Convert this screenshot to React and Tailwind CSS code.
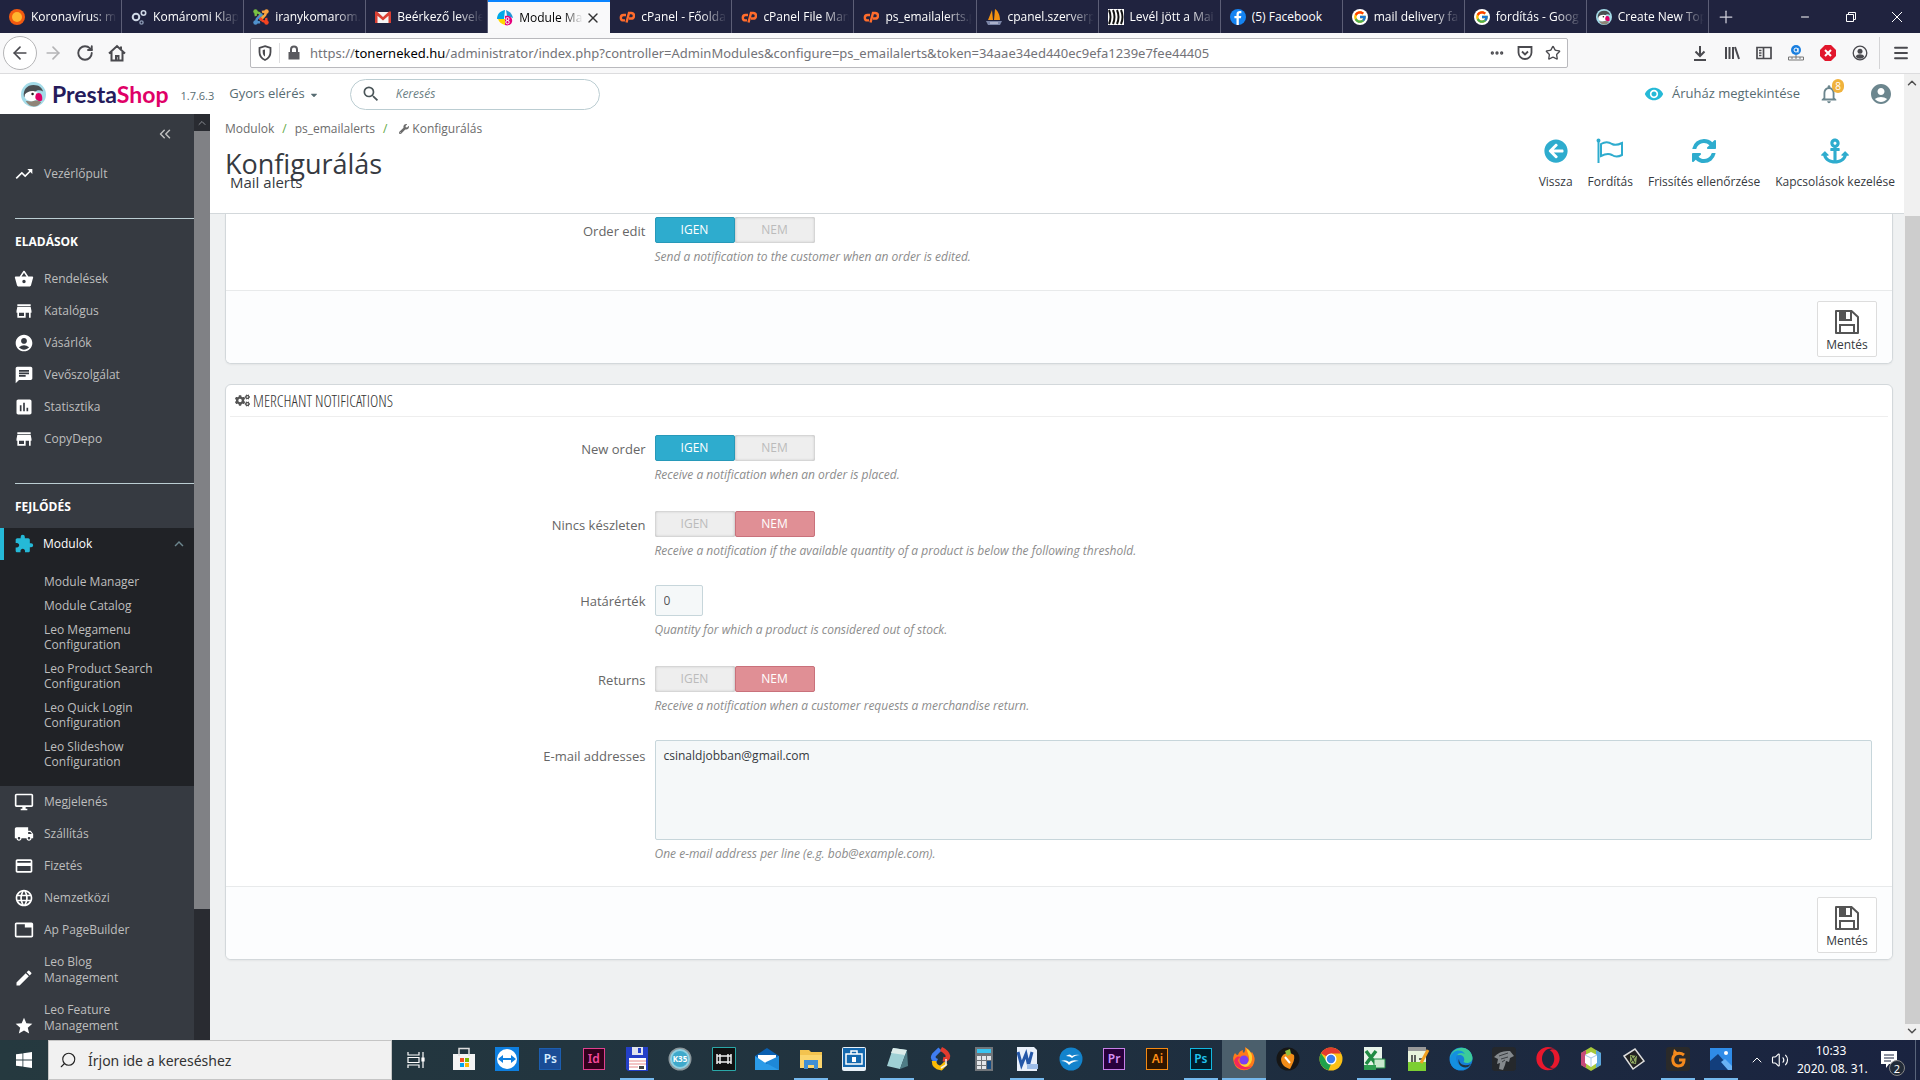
import { useState } from 'react';
import {
  MdTrendingUp, MdShoppingBasket, MdStore, MdAccountCircle, MdChat, MdAssessment,
  MdExtension, MdOutlineDesktopWindows, MdLocalShipping, MdPayment, MdLanguage, MdTab,
  MdEdit, MdStar, MdKeyboardArrowUp, MdRemoveRedEye, MdNotificationsNone, MdSearch,
} from 'react-icons/md';
import { FaArrowCircleLeft, FaAnchor, FaWrench, FaCogs, FaCaretDown, FaOpera } from 'react-icons/fa';
import { FcGoogle } from 'react-icons/fc';
import {
  ArrowLeft, ArrowRight, RotateCw, X, Plus, Minus, Menu, Star, ChevronUp,
  ChevronDown, ChevronsLeft, Volume2, Search, Ellipsis,
} from 'lucide-react';

/* ---------- logos ---------- */

const PuffinLogo = ({ className }) => (
  <svg viewBox="0 0 26 26" className={className} aria-hidden="true">
    <circle cx="13" cy="13" r="13" fill="#a4dbe8" />
    <path d="M3 15C2 8 6 3 13 3c6 0 9 3 10 7-3-2-6-2-8 0-3 4-7 6-12 5Z" fill="#4a4f52" />
    <path d="M4 13c3-4 9-5 13-2 2 4 0 8-5 9-5 0-9-2-8-7Z" fill="#fff" />
    <circle cx="12" cy="12.500" r="1.300" fill="#222" />
    <path d="M16 12c4-2 7 1 6 7-2 1-3 2-5 0-2-1-3-3-1-7Z" fill="#df0067" />
    <path d="M5 20c2-1 4 1 7 0s6-1 9 1c-4 6-12 6-16-1Z" fill="#8f8578" />
  </svg>
);

const OrangeDot = () => (
  <svg viewBox="0 0 16 16" className="size-4">
    <circle cx="8" cy="8" r="8" fill="#f25a10" />
    <circle cx="8" cy="8" r="5" fill="#ffb52e" />
  </svg>
);

const GearsIcon = () => (
  <svg viewBox="0 0 16 16" className="size-4" fill="none" stroke="#cfd8e6">
    <circle cx="5" cy="8" r="3.3" strokeWidth="2" />
    <circle cx="12.5" cy="4" r="2.2" strokeWidth="1.6" />
    <circle cx="10.5" cy="13.5" r="1.6" strokeWidth="1.4" stroke="#8d9bb5" />
  </svg>
);

const JoomlaIcon = () => (
  <svg viewBox="0 0 16 16" className="size-4" fill="none" strokeWidth="2.500">
    <path d="M3 7q-1-3 1-3.500t4 2.500l3 3" stroke="#7ac143" />
    <path d="M9 3q3-1 3.500 1T10 8l-3 3" stroke="#f9a541" />
    <path d="M13 9q1 3-1 3.500T8 10L5 7" stroke="#f44321" />
    <path d="M7 13q-3 1-3.500-1T6 8l3-3" stroke="#5091cd" />
    <g stroke="none">
      <circle cx="2.500" cy="2.500" r="2.200" fill="#7ac143" />
      <circle cx="13.500" cy="2.500" r="2.200" fill="#f9a541" />
      <circle cx="13.500" cy="13.500" r="2.200" fill="#f44321" />
      <circle cx="2.500" cy="13.500" r="2.200" fill="#5091cd" />
    </g>
  </svg>
);

const GmailIcon = () => (
  <svg viewBox="0 0 16 16" className="size-4">
    <path d="M1 3h14v11H1z" fill="#f4f4f4" />
    <path d="M0 2.500h2L8 8l6-5.500h2V14h-2.500V6.800L8 11.500 2.500 6.800V14H0z" fill="#d93f33" />
  </svg>
);

const TonerIcon = () => (
  <svg viewBox="0 0 16 16" className="size-4">
    <path d="M8 0C3 1 0 4 0 9h7z" fill="#00a8e8" />
    <path d="M9 0c4 2 6 4 7 8l-6-2z" fill="#2196d8" />
    <path d="M1 9h7v6C4 14 2 12 1 9Z" fill="#ffd800" />
    <path d="M8 6c5-1 8 2 7 6-1 3-4 4-7 3Z" fill="#e5007d" />
    <circle cx="10.500" cy="9" r="1.500" fill="none" stroke="#fff" />
    <circle cx="10.500" cy="12.200" r="1.700" fill="none" stroke="#fff" />
  </svg>
);

const CpanelIcon = () => (
  <svg viewBox="0 0 16 16" className="size-4" fill="none" stroke="#ff6c2c" strokeWidth="2.400">
    <path d="M7 6H4.500a2.700 2.700 0 0 0 0 5.400H6" />
    <path d="M7.500 13.500 10 4h2.200a2.500 2.500 0 0 1 0 5.500H10" />
  </svg>
);

const PmaIcon = () => (
  <svg viewBox="0 0 16 16" className="size-4">
    <path d="M6 1 2 11h5zM9 0l-1 11h6C14 6 12 2 9 0Z" fill="#f29111" />
    <path d="M0 12h16l-2 4H2z" fill="#7c86a8" />
    <path d="M4 14h8" stroke="#dde" />
  </svg>
);

const WaveIcon = () => (
  <svg viewBox="0 0 16 16" className="size-4">
    <path d="M0 0h16v16H0z" fill="#fff" />
    <path d="M1 1q3 7 0 14M5 1q3 7 0 14M9 1q3 7 0 14M13 1q3 7 0 14" stroke="#111" strokeWidth="2" fill="none" />
  </svg>
);

const FacebookIcon = () => (
  <svg viewBox="0 0 16 16" className="size-4">
    <circle cx="8" cy="8" r="8" fill="#1583f2" />
    <path d="M8.800 16V9.300h2.100l.4-2.400H8.800V5.600c0-.8.4-1.300 1.400-1.300h1.200V2.200C8.400 1.700 6.500 2.700 6.500 5.200v1.700H4.400v2.400h2.100V16z" fill="#fff" />
  </svg>
);

const GoogleTabIcon = () => (
  <span className="flex size-4 items-center justify-center rounded-full bg-white">
    <FcGoogle className="size-3.5" />
  </span>
);

/* ---------- browser chrome ---------- */

const tabs = [
  { title: 'Koronavírus: m', icon: <OrangeDot /> },
  { title: 'Komáromi Klap', icon: <GearsIcon /> },
  { title: 'iranykomarom.', icon: <JoomlaIcon /> },
  { title: 'Beérkező levele', icon: <GmailIcon /> },
  { title: 'Module Ma', icon: <TonerIcon />, active: true },
  { title: 'cPanel - Főolda', icon: <CpanelIcon /> },
  { title: 'cPanel File Man', icon: <CpanelIcon /> },
  { title: 'ps_emailalerts.p', icon: <CpanelIcon /> },
  { title: 'cpanel.szerverp', icon: <PmaIcon /> },
  { title: 'Levél jött a Mai', icon: <WaveIcon /> },
  { title: '(5) Facebook', icon: <FacebookIcon />, short: true },
  { title: 'mail delivery fai', icon: <GoogleTabIcon /> },
  { title: 'fordítás - Goog', icon: <GoogleTabIcon /> },
  { title: 'Create New Top', icon: <PuffinLogo className="size-4" /> },
];

const Tab = ({ tab }) => (
  <div
    className={
      tab.active
        ? 'flex h-full min-w-0 flex-1 items-center border-t-2 border-[#0a84ff] bg-[#f9f9fa] pr-[5px] pl-[9px] text-black'
        : 'flex h-full min-w-0 flex-1 items-center border-r border-[#5c5e76] pr-1 pl-[9px] text-white'
    }
  >
    <span className="shrink-0">{tab.icon}</span>
    <span
      className={
        tab.short
          ? 'ml-1.5 min-w-0 flex-1 overflow-hidden whitespace-nowrap'
          : 'ml-1.5 min-w-0 flex-1 overflow-hidden whitespace-nowrap [mask-image:linear-gradient(to_right,black_70%,transparent)]'
      }
    >
      {tab.title}
    </span>
    {tab.active && (
      <button type="button" aria-label="Close tab" className="mr-1 ml-0.5 shrink-0">
        <X className="size-4 text-[#333]" />
      </button>
    )}
  </div>
);

const TabBar = () => (
  <div className="flex h-[33px] shrink-0 items-center bg-[#20233f] text-[12px]">
    <div className="flex h-full w-[89%] shrink-0">
      {tabs.map((tab) => <Tab key={tab.title} tab={tab} />)}
    </div>
    <button type="button" aria-label="New tab" className="ml-[7px] text-[#d0d1dc]">
      <Plus className="size-5" strokeWidth={1.5} />
    </button>
    <div className="ml-auto flex text-white">
      <button type="button" aria-label="Minimize" className="flex w-[46px] items-center justify-center">
        <Minus className="size-3" strokeWidth={2} />
      </button>
      <button type="button" aria-label="Restore" className="flex w-[46px] items-center justify-center">
        <svg viewBox="0 0 10 10" className="size-[10px]" fill="none" stroke="currentColor">
          <path d="M.5 2.500h7v7h-7zM2.500 2.500v-2h7v7h-2" />
        </svg>
      </button>
      <button type="button" aria-label="Close" className="flex w-[46px] items-center justify-center">
        <svg viewBox="0 0 10 10" className="size-[10px]" stroke="currentColor"><path d="m0 0 10 10M10 0 0 10" /></svg>
      </button>
    </div>
  </div>
);

const AddressBar = () => (
  <div className="flex h-[41px] shrink-0 items-center border-b border-[#dcdcde] bg-[#f8f8f9] text-[#4a4a4f]">
    <button type="button" aria-label="Back" className="ml-[3px] flex size-[34px] items-center justify-center rounded-full border border-[#b5b5b7] bg-white">
      <ArrowLeft className="size-5" />
    </button>
    <button type="button" aria-label="Forward" className="ml-1.5 text-[#b4b4b6]"><ArrowRight className="size-5" /></button>
    <button type="button" aria-label="Reload" className="ml-[13px]"><RotateCw className="size-[18px]" strokeWidth={2.500} /></button>
    <button type="button" aria-label="Home" className="ml-3.5">
      <svg viewBox="0 0 18 18" className="size-[18px]" fill="none" stroke="currentColor" strokeWidth="2">
        <path d="M1 9.500 9 2l8 7.500M3.500 8v8.500h11V8M13 5V2.500M8 16v-4h2.500v4" />
      </svg>
    </button>
    <div className="ml-[124px] flex h-[30px] flex-1 items-center rounded-xs border border-[#b9b9bd] bg-white">
      <svg viewBox="0 0 16 16" className="ml-1.5 size-4" fill="none" stroke="currentColor" strokeWidth="1.800">
        <path d="M8 1.200 13.500 3v4c0 4-2 6.500-5.500 8-3.500-1.500-5.500-4-5.500-8V3z" />
        <path d="M8 4.500v7c-1.500-1-2.300-2.500-2.300-4.500V5z" fill="currentColor" stroke="none" />
      </svg>
      <span className="mx-1.5 h-5 w-px bg-[#dedee0]" />
      <svg viewBox="0 0 16 16" className="size-4" fill="#5a5a5f">
        <path d="M2.500 7h11v7.500h-11z" />
        <path d="M5 7V4.500a3 3 0 0 1 6 0V7" fill="none" stroke="#5a5a5f" strokeWidth="2" />
      </svg>
      <p className="ml-2 min-w-0 flex-1 overflow-hidden pt-px font-['Noto_Sans',sans-serif] text-[13px] whitespace-nowrap text-[#737378]">
        https://<span className="text-black">tonerneked.hu</span>/administrator/index.php?controller=AdminModules&amp;configure=ps_emailalerts&amp;token=34aae34ed440ec9efa1239e7fee44405
      </p>
      <div className="mr-1.5 flex items-center gap-3">
        <button type="button" aria-label="Page actions"><Ellipsis className="size-4" strokeWidth={3} /></button>
        <button type="button" aria-label="Save to Pocket">
          <svg viewBox="0 0 16 16" className="size-4" fill="none" stroke="currentColor" strokeWidth="1.800">
            <path d="M1.500 2h13v5.500a6.500 6.500 0 0 1-13 0z" /><path d="m5 6.500 3 3 3-3" />
          </svg>
        </button>
        <button type="button" aria-label="Bookmark"><Star className="size-4" /></button>
      </div>
    </div>
    <div className="mr-[11px] ml-[124px] flex items-center gap-4">
      <svg viewBox="0 0 16 16" className="size-4" fill="none" stroke="currentColor" strokeWidth="2"><path d="M8 1v9.500M3.500 6.500 8 11l4.500-4.500M2 15h12" /></svg>
      <svg viewBox="0 0 16 16" className="size-4" fill="none" stroke="currentColor" strokeWidth="2"><path d="M2 2v12M5.500 2v12M9 2v12M11 2l4 12" /></svg>
      <svg viewBox="0 0 16 16" className="size-4" fill="none" stroke="currentColor" strokeWidth="1.700"><path d="M1 2.500h14v11H1zM7.500 2.500v11M3 5.500h2.500M3 8h2.500M3 10.500h2.500" /></svg>
      <svg viewBox="0 0 16 16" className="size-4"><circle cx="8" cy="5" r="5" fill="#1a7fe0" /><circle cx="8" cy="5" r="2" fill="none" stroke="#fff" /><path d="M10 3v4.500" stroke="#fff" /><path d="M.5 15v-3h15v3zM4 12v2M8 10v4M12 12v2" fill="none" stroke="#777" /></svg>
      <svg viewBox="0 0 16 16" className="size-4"><path d="M5 0h6l5 5v6l-5 5H5l-5-5V5z" fill="#e2172c" /><path d="m5 5 6 6M11 5l-6 6" stroke="#fff" strokeWidth="2" /></svg>
      <svg viewBox="0 0 16 16" className="size-4" fill="currentColor"><circle cx="8" cy="8" r="6.800" fill="none" stroke="currentColor" strokeWidth="1.300" /><circle cx="8" cy="6.300" r="2.500" /><path d="M3.800 11.500c1-3 7.400-3 8.400 0-2 3-6.400 3-8.400 0Z" /></svg>
    </div>
    <div className="flex h-8 items-center border-l border-[#d4d4d6] pr-2.5 pl-3">
      <button type="button" aria-label="Menu"><Menu className="size-[18px]" strokeWidth={2.500} /></button>
    </div>
  </div>
);

/* ---------- back office ---------- */

const AdminHeader = () => (
  <header className="flex h-10 shrink-0 items-center bg-white pr-[11px] pl-[21px] text-[#576c72]">
    <a href="#" className="flex items-center">
      <PuffinLogo className="size-[25px]" />
      <span className="ml-1.5 font-['Lato',sans-serif] text-[23px] leading-6 font-bold text-[#251b5b]">
        Presta<span className="text-[#df0067]">Shop</span>
      </span>
    </a>
    <span className="mt-1 ml-3 text-[11px] leading-4">1.7.6.3</span>
    <button type="button" className="ml-[15px] flex items-center gap-1 text-[13px]">
      Gyors elérés <FaCaretDown className="mt-0.5 size-2.5" />
    </button>
    <div className="ml-[31px] flex h-[31px] w-[250px] items-center rounded-full border border-[#bbcdd2] bg-white px-2.5">
      <MdSearch className="size-5 shrink-0 text-[#4a5558]" />
      <input
        type="text"
        aria-label="Keresés"
        placeholder="Keresés"
        className="ml-[15px] w-full min-w-0 text-[12px] italic outline-none placeholder:text-[#6c7f85]"
      />
    </div>
    <a href="#" className="ml-auto flex items-center gap-2 text-[13px]">
      <MdRemoveRedEye className="size-5 text-[#25b9d7]" /> Áruház megtekintése
    </a>
    <button type="button" aria-label="Értesítések" className="relative ml-[18px]">
      <MdNotificationsNone className="size-[22px] text-[#6c868e]" />
      <span className="absolute -top-1 -right-1 flex h-3.5 w-3 items-center justify-center rounded-full bg-[#f0b23c] text-[10px] leading-3 text-white">8</span>
    </button>
    <button type="button" aria-label="Profil" className="ml-[29px]">
      <MdAccountCircle className="size-6 text-[#6c868e]" />
    </button>
  </header>
);

const sales = [
  { label: 'Rendelések', icon: MdShoppingBasket },
  { label: 'Katalógus', icon: MdStore },
  { label: 'Vásárlók', icon: MdAccountCircle },
  { label: 'Vevőszolgálat', icon: MdChat },
  { label: 'Statisztika', icon: MdAssessment },
  { label: 'CopyDepo', icon: MdStore },
];

const moduleLinks = [
  'Module Manager',
  'Module Catalog',
  'Leo Megamenu Configuration',
  'Leo Product Search Configuration',
  'Leo Quick Login Configuration',
  'Leo Slideshow Configuration',
];

const improve = [
  { label: 'Megjelenés', icon: MdOutlineDesktopWindows },
  { label: 'Szállítás', icon: MdLocalShipping },
  { label: 'Fizetés', icon: MdPayment },
  { label: 'Nemzetközi', icon: MdLanguage },
  { label: 'Ap PageBuilder', icon: MdTab },
  { label: 'Leo Blog Management', icon: MdEdit },
  { label: 'Leo Feature Management', icon: MdStar },
];

const MenuItem = ({ label, icon: Icon }) => (
  <li>
    <a href="#" className="flex items-end py-2 pr-12 pl-3.5 leading-4">
      <Icon className="-my-0.5 mr-2.5 size-5 shrink-0 text-white" />
      <span>{label}</span>
    </a>
  </li>
);

const Sidebar = () => (
  <aside className="flex w-[210px] shrink-0 overflow-hidden bg-[#363a41] text-[12px] text-[#bebebe]">
    <nav className="min-w-0 flex-1 overflow-hidden">
      <div className="flex h-10 items-center justify-end pr-5">
        <button type="button" aria-label="Collapse menu"><ChevronsLeft className="size-[18px]" /></button>
      </div>
      <ul className="mt-1"><MenuItem label="Vezérlőpult" icon={MdTrendingUp} /></ul>
      <h2 className="mt-7 ml-[15px] border-t border-[#bbcdd2] pt-[15px] leading-4 font-bold text-white">ELADÁSOK</h2>
      <ul className="mt-[13px]">
        {sales.map((item) => <MenuItem key={item.label} {...item} />)}
      </ul>
      <h2 className="mt-7 ml-[15px] border-t border-[#bbcdd2] pt-[15px] leading-4 font-bold text-white">FEJLŐDÉS</h2>
      <div className="mt-[13px] bg-[#202226] pb-[13px]">
        <a href="#" className="flex h-8 items-center border-l-4 border-[#25b9d7] pr-1.5 pl-2.5 text-white">
          <MdExtension className="mr-[9px] size-5 text-[#25b9d7]" /> Modulok
          <MdKeyboardArrowUp className="ml-auto size-[18px] text-[#6c868e]" />
        </a>
        <ul className="mt-[9px] pr-6 pl-11">
          {moduleLinks.map((label) => (
            <li key={label} className="pt-[5px] pb-1 leading-[15px]"><a href="#" className="block">{label}</a></li>
          ))}
        </ul>
      </div>
      <ul>
        {improve.map((item) => <MenuItem key={item.label} {...item} />)}
      </ul>
    </nav>
    <div className="flex w-4 shrink-0 flex-col bg-[#292b31]">
      <span className="flex h-[17px] items-center justify-center"><ChevronUp className="size-3 text-[#8a8d93]" /></span>
      <span className="h-[84%] bg-[#808185]" />
    </div>
  </aside>
);

const FlagIcon = () => (
  <svg viewBox="0 0 28 28" className="size-7" fill="none" stroke="currentColor" strokeWidth="2">
    <path d="M2.500 4v22" /><circle cx="2.500" cy="3.500" r="1" />
    <path d="M5 7c5-3 8-2 11 0 3 1.500 6 1 10-1v12c-4 2-7 2-10 0-3-1.500-6-1.500-11 1z" />
  </svg>
);

const RefreshIcon = () => (
  <svg viewBox="0 0 1536 1536" className="m-0.5 size-6" fill="currentColor">
    <path d="M1511 928q0 5-1 7-64 268-268 434.500t-478 166.500q-146 0-282.500-55t-243.500-157l-129 129q-19 19-45 19t-45-19-19-45v-448q0-26 19-45t45-19h448q26 0 45 19t19 45-19 45l-137 137q71 66 161 102t187 36q134 0 250-65t186-179q11-17 53-117 8-23 30-23h192q13 0 22.500 9.500t9.500 22.500zm25-800v448q0 26-19 45t-45 19h-448q-26 0-45-19t-19-45 19-45l138-138q-148-137-349-137-134 0-250 65t-186 179q-11 17-53 117-8 23-30 23h-199q-13 0-22.500-9.500t-9.500-22.500v-7q65-268 270-434.500t480-166.500q146 0 284 55.500t245 156.500l130-129q19-19 45-19t45 19 19 45z" />
  </svg>
);

const actions = [
  { label: 'Vissza', icon: <FaArrowCircleLeft className="m-0.5 size-6" /> },
  { label: 'Fordítás', icon: <FlagIcon /> },
  { label: 'Frissítés ellenőrzése', icon: <RefreshIcon /> },
  { label: 'Kapcsolások kezelése', icon: <FaAnchor className="size-7" /> },
];

const PageHead = () => (
  <div className="flex h-[100px] shrink-0 justify-between border-b border-[#d3d8db] bg-white pr-[9px] pl-[15px]">
    <div>
      <nav className="mt-[5px] flex items-center text-[12px] leading-5 text-[#6c6c6c]">
        <a href="#">Modulok</a>
        <span className="px-2 text-[#5fa843]">/</span>
        <a href="#">ps_emailalerts</a>
        <span className="px-2 text-[#5fa843]">/</span>
        <FaWrench className="mr-[3px] ml-1 size-2.5" /> Konfigurálás
      </nav>
      <h1 className="mt-[7px] text-[27px] leading-9 text-[#363a41]">Konfigurálás</h1>
      <h4 className="-mt-2.5 ml-[5px] text-[15px] leading-5 text-[#363a41]">Mail alerts</h4>
    </div>
    <div className="flex items-start gap-[15px] pt-[23px] text-[12px] leading-4 text-[#363a41]">
      {actions.map(({ label, icon }) => (
        <a key={label} href="#" className="flex flex-col items-center gap-[9px]">
          <span className="text-[#2eacce]">{icon}</span>
          {label}
        </a>
      ))}
    </div>
  </div>
);

const Row = ({ label, labelId, htmlFor, help, children }) => (
  <div className="flex">
    {htmlFor
      ? <label htmlFor={htmlFor} className="w-1/4 shrink-0 pr-[7px] text-right text-[13px] leading-8 text-[#666]">{label}</label>
      : <span id={labelId} className="w-1/4 shrink-0 pr-[7px] text-right text-[13px] leading-8 text-[#666]">{label}</span>}
    <div className="ml-0.5 min-w-0 flex-1">
      {children}
      <p className="mt-[5px] text-[12px] leading-[18px] text-[#8c8c8c] italic">{help}</p>
    </div>
  </div>
);

const SwitchRow = ({ name, label, help, initial }) => {
  const [on, setOn] = useState(initial);
  const off = 'flex h-full w-20 items-center justify-center rounded-xs text-[#bbb] shadow-[inset_0_0_3px_#aaa]';
  return (
    <Row label={label} labelId={`${name}-label`} help={help}>
      <div role="radiogroup" aria-labelledby={`${name}-label`} className="relative mt-[2px] flex h-[26px] w-40 rounded-xs bg-[#eee] text-[12px]">
        <input type="radio" id={`${name}-on`} name={name} checked={on} onChange={() => setOn(true)} className="sr-only" />
        <label
          htmlFor={`${name}-on`}
          className={on ? 'flex h-full w-20 items-center justify-center rounded-xs border border-[#2799b9] bg-[#2eacce] text-white' : off}
        >
          IGEN
        </label>
        <input type="radio" id={`${name}-off`} name={name} checked={!on} onChange={() => setOn(false)} className="sr-only" />
        <label
          htmlFor={`${name}-off`}
          className={on ? off : 'flex h-full w-20 items-center justify-center rounded-xs border border-[#c9717b] bg-[#e08f95] text-white'}
        >
          NEM
        </label>
      </div>
    </Row>
  );
};

const SaveFooter = () => (
  <div className="flex justify-end border-t border-[#e8eaeb] bg-[#fcfdfe] pt-2.5 pr-[15px] pb-1.5">
    <button type="submit" className="flex h-14 w-[60px] flex-col items-center rounded-xs border border-[#ddd] bg-white pt-2 text-[12px] leading-4 text-[#363a41]">
      <svg viewBox="0 0 24 24" className="mb-[3px] size-6" fill="none" stroke="#555" strokeWidth="2">
        <path d="M1 1h15.500L23 7v16H1z" strokeLinejoin="round" />
        <path d="M5 1h11v9H5z" /><path d="M5 1h5v9H5z" fill="#555" />
        <path d="M5 23v-8h14v8" />
      </svg>
      Mentés
    </button>
  </div>
);

const Content = () => (
  <main className="flex-1 overflow-hidden bg-[#eff1f2] pr-[11px] pl-[15px]">
    <form className="overflow-hidden rounded-b-md border-x border-b border-[#d3d8db] bg-white shadow-xs">
      <div className="px-5 pt-px pb-6">
        <SwitchRow name="order-edit" label="Order edit" help="Send a notification to the customer when an order is edited." initial />
      </div>
      <SaveFooter />
    </form>
    <form className="mt-5 overflow-hidden rounded-md border border-[#d3d8db] bg-white shadow-xs">
      <h3 className="mx-1 flex h-8 items-center border-b border-[#eee] pl-[5px] font-['Open_Sans_Condensed_Light','Open_Sans_Condensed','Open_Sans',sans-serif] text-[16px] font-light text-[#333]">
        <FaCogs className="mr-[3px] size-[15px] text-[#555]" /> MERCHANT NOTIFICATIONS
      </h3>
      <div className="flex flex-col gap-[25px] px-5 pt-4 pb-[23px]">
        <SwitchRow name="new-order" label="New order" help="Receive a notification when an order is placed." initial />
        <SwitchRow name="oos" label="Nincs készleten" help="Receive a notification if the available quantity of a product is below the following threshold." initial={false} />
        <Row label="Határérték" htmlFor="threshold" help="Quantity for which a product is considered out of stock.">
          <input
            id="threshold"
            type="text"
            defaultValue="0"
            className="block h-[31px] w-12 rounded-xs border border-[#c7d6db] bg-[#f5f8f9] px-2 text-[12px] text-[#555]"
          />
        </Row>
        <SwitchRow name="returns" label="Returns" help="Receive a notification when a customer requests a merchandise return." initial={false} />
        <Row label="E-mail addresses" htmlFor="emails" help="One e-mail address per line (e.g. bob@example.com).">
          <textarea
            id="emails"
            defaultValue="csinaldjobban@gmail.com"
            className="block h-[100px] w-full resize-none rounded-xs border border-[#c7d6db] bg-[#f5f8f9] px-2 py-1.5 text-[12px] leading-[18px] text-[#363a41]"
          />
        </Row>
      </div>
      <SaveFooter />
    </form>
  </main>
);

const PageScrollbar = () => (
  <div className="flex w-4 shrink-0 flex-col items-center bg-[#f0f0f0] py-0.5 text-[#505050]">
    <ChevronUp className="size-3.5" strokeWidth={2.500} />
    <span className="mt-auto h-[84%] w-[15px] bg-[#cdcdcd]" />
    <ChevronDown className="size-3.5" strokeWidth={2.500} />
  </div>
);

/* ---------- taskbar ---------- */

const Svg = ({ children }) => <svg viewBox="0 0 24 24" className="size-6">{children}</svg>;

const AdobeTile = ({ text, className }) => (
  <span className={`flex size-[22px] items-center justify-center border text-[12px] leading-3 font-semibold ${className}`}>{text}</span>
);

const apps = [
  { name: 'Store', icon: <Svg><path d="M1 7h22v16H1z" fill="#f4f4f4" /><path d="M7 9V1.500h10V9" fill="none" stroke="#ddd" strokeWidth="1.500" /><path d="M8 11h4v4H8z" fill="#f25022" /><path d="M13 11h4v4h-4z" fill="#7fba00" /><path d="M8 16h4v4H8z" fill="#00a4ef" /><path d="M13 16h4v4h-4z" fill="#ffb900" /></Svg> },
  { name: 'TeamViewer', icon: <Svg><path d="M0 0h24v24H0z" fill="#0e7fe0" /><circle cx="12" cy="12" r="10" fill="#fff" /><path d="m3 12 5-4v3h8V8l5 4-5 4v-3H8v3z" fill="#0e7fe0" /></Svg> },
  { name: 'Photoshop CS', icon: <AdobeTile text="Ps" className="border-[#1c5eb0] bg-[#1a4c96] text-[#d6ecff]" /> },
  { name: 'InDesign', icon: <AdobeTile text="Id" className="border-[#e0408f] bg-[#33001c] text-[#f5499c]" /> },
  { name: 'Total Commander', running: true, icon: <Svg><path d="M1 0h22v24H3l-2-2z" fill="#2440c8" /><path d="M7 0h11v8H7z" fill="#dfe3ee" /><path d="M13 1h3v5h-3z" fill="#2440c8" /><path d="M4 11h17v12H4z" fill="#fff" /><path d="M4 14h17M4 17h17M4 20h9" stroke="#e78a8a" /><path d="M14 19h5v3h-5z" fill="#444" /></Svg> },
  { name: 'KBS', icon: <Svg><circle cx="12" cy="12" r="11.500" fill="#8b979c" /><circle cx="12" cy="12" r="10" fill="#8fd0e2" /><circle cx="12" cy="12" r="8" fill="#3fa9cb" /><text x="12" y="15" fontSize="8" fontWeight="bold" textAnchor="middle" fill="#fff">K35</text></Svg> },
  { name: 'Video', icon: <Svg><path d="M.5.5h23v23H.5z" fill="#111" stroke="#2aa8a8" /><path d="M5 7v10M8 7v10M16 7v10M19 7v10M5 9h14M5 15h14" stroke="#eee" strokeWidth="1.500" /></Svg> },
  { name: 'Mail', icon: <Svg><path d="M0 9 12 1l12 8v14H0z" fill="#0a5fb0" /><path d="M3 8h18v8H3z" fill="#fff" /><path d="m0 9 12 8 12-8v14H0z" fill="#2b9be8" /><path d="M24 9v14L10 15.500z" fill="#1e88d8" /></Svg> },
  { name: 'File Explorer', running: true, icon: <Svg><path d="M1 3h9l2 2h11v16H1z" fill="#f3c34f" /><path d="M1 8h22v13H1z" fill="#fbd56d" /><path d="M5 13h14v9h-4v-4H9v4H5z" fill="#3f8fd4" /></Svg> },
  { name: 'Locker', icon: <Svg><rect width="24" height="24" rx="2" fill="#e8f1f8" /><path d="M1 1h22v19H1z" fill="#1468ae" /><path d="M4 7h16v10H4zM9 7V4h6v3" fill="none" stroke="#fff" strokeWidth="1.500" /><path d="M10 10h4v5h-4z" fill="#fff" /></Svg> },
  { name: 'Notepad', running: true, icon: <Svg><path d="m8 1 14 2-7 19L2 19z" fill="#9fd0d5" /><path d="m8 1 14 2-2 5L6 6z" fill="#dcebe9" /><path d="m22 3 1 16-8 3z" fill="#4f7d86" /></Svg> },
  { name: 'Editor', icon: <Svg><g fill="none" strokeWidth="4.500"><path d="M11 2 5 8q-2 3 1 5l2 1" stroke="#3f7df0" /><path d="M12 2q6 3 7 7 0 4-5 3" stroke="#e33b2e" /><path d="M5 14q0 6 7 7l5-5" stroke="#fbbc05" /></g><path d="M17 12v6l-5 3" fill="none" stroke="#f0f0f0" strokeWidth="1.500" /></Svg> },
  { name: 'Calculator', icon: <Svg><path d="M3 0h18v24H3z" fill="#70757a" /><path d="M5 2h14v4H5z" fill="#39c3ee" /><path d="M5 9h4v4H5zM10 9h4v4h-4zM15 9h4v4h-4zM5 14h4v4H5zM10 14h4v4h-4zM5 19h4v3H5zM10 19h4v3h-4z" fill="#e4e7ea" /><path d="M15 14h4v8h-4z" fill="#174c82" /></Svg> },
  { name: 'Word', running: true, icon: <Svg><path d="M2 0h17l3 3v21H2z" fill="#e9f0fa" /><path d="m3 5 3.500 13L11 7l2.500 11L17 5" fill="none" stroke="#2457a8" strokeWidth="3" /><path d="M12 17h11v5H12z" fill="#9dbde8" /></Svg> },
  { name: 'OpenOffice', icon: <Svg><circle cx="12" cy="12" r="11.500" fill="#1383cc" /><path d="M7 9q4-3 6 0 3-2 8-1-5 0-8 3-2-2-6-2ZM2 14q5-2 8 1 4-3 10-1-6 0-10 4-3-4-8-4Z" fill="#fff" /></Svg> },
  { name: 'Premiere', icon: <AdobeTile text="Pr" className="border-[#c77fe8] bg-[#28003c] text-[#d691f5]" /> },
  { name: 'Illustrator', icon: <AdobeTile text="Ai" className="border-[#f58a12] bg-[#2e1600] text-[#ff8f16]" /> },
  { name: 'Photoshop', running: true, icon: <AdobeTile text="Ps" className="border-[#12b8e0] bg-[#001d2b] text-[#20c4ef]" /> },
  { name: 'Firefox', running: true, focused: true, icon: <Svg><path d="M3 6q1 2 3 2 1-4 5-5-1 2 1 3 2-3 1-6 4 2 6 6l1-1q4 6 2 11a10.500 10.500 0 0 1-20 0Q0 10 3 6Z" fill="#ff7a1a" /><path d="M14 1q5 3 6 8 1 9-7 11-7 0-8-6 2 3 7 3 6-1 5-7-1-4-3-9Z" fill="#ffd02e" /><circle cx="12" cy="13" r="4.500" fill="#7b3ff2" /><path d="M2 14a10.500 10.500 0 0 0 18 5q-9 4-14-5 0-3 3-4-5-2-7 4Z" fill="#f5285a" /></Svg> },
  { name: 'FL Studio', icon: <Svg><circle cx="12" cy="12" r="11.500" fill="#161616" /><path d="M5 12c1-6 8-8 13-4 1 5-1 8-4 14-4-1-9-4-9-10Z" fill="#f28c18" /><path d="m9 4 5-2 1 5-4 2z" fill="#8fbf3c" /><path d="m9 10 5 6" stroke="#fff" strokeWidth="2" /></Svg> },
  { name: 'Chrome', icon: <Svg><circle cx="12" cy="12" r="11.500" fill="#fbc116" /><path d="M12 12 2 6.300A11.500 11.500 0 0 1 22 6.500H12z" fill="#e33b2e" /><path d="M2 6.300 8 15l4 2-2.500 6.200A11.500 11.500 0 0 1 2 6.300Z" fill="#1fa14b" /><circle cx="12" cy="12" r="5.500" fill="#fff" /><circle cx="12" cy="12" r="4.200" fill="#3b7ded" /></Svg> },
  { name: 'Excel', running: true, icon: <Svg><path d="M2 0h18v20H2z" fill="#e8f4ea" /><path d="m4 4 10 13M14 4 4 17" stroke="#1f8a43" strokeWidth="3.500" /><path d="M12 12h11v9H12z" fill="#c8e8cd" stroke="#1f8a43" /><path d="M2 18h12v5H2z" fill="#2f9e52" /></Svg> },
  { name: 'Notepad++', icon: <Svg><path d="M2 2h18v22H2z" fill="#e9f3dc" /><path d="M2 15h18v9H2z" fill="#7ccf32" /><path d="M2 0h18v4H2z" fill="#999" /><path d="M6 8v7M9 8v7M13 12h4" stroke="#333" strokeWidth="1.500" /><path d="m22 3-7 13" stroke="#f0a020" strokeWidth="3" /></Svg> },
  { name: 'Edge', icon: <Svg><circle cx="12" cy="12" r="11.500" fill="#1580d8" /><path d="M1 11C3-2 22-3 23.500 11c0 5-6 6-9 4 2-3 0-7-4-7-5 0-8 2-9.500 3Z" fill="#3ccb9a" /><path d="M1 11C3 3 12 1 16 7c-6-3-9 1-9 5 1 6 6 9 12 8C10 27 0 21 1 11Z" fill="#1490df" /><path d="M10 12c0 5 5 8 12 5l-3 3c-7 2-11-4-9-8Z" fill="#20323f" /></Svg> },
  { name: 'Wolf', icon: <Svg><rect width="24" height="24" rx="3" fill="#25282c" /><path d="M2 10q6-7 16-6l4 5-4 2-1 4-3-1-1 4-2 5-4-1 1-6-3 1 1-5z" fill="#84898d" /><path d="m7 9 9-3M9 12l7-2M10 15l3-2" stroke="#3a3e42" /></Svg> },
  { name: 'Opera', icon: <FaOpera className="size-6 text-[#e8182d]" /> },
  { name: 'Cube', icon: <Svg><path d="m12 0 10 6v12l-10 6-10-6V6z" fill="#a8c83a" /><path d="m2 6 5-3v18l-5-3z" fill="#c74a78" /><path d="m22 6-5-3v18l5-3z" fill="#5aa5dc" /><path d="m12 5 6 3v8l-6 4-6-4V8z" fill="#fff" /><path d="m6 8 6 3v9M12 11l6-3" stroke="#a9c8e8" fill="none" /></Svg> },
  { name: 'Tool', icon: <Svg><path d="M13 2 22 14 11 22 2 9z" fill="#222" stroke="#ddd" strokeWidth="1.500" /><path d="m8 8 7 1-1 8-6-1z" fill="#8ea860" /><path d="m9 9 4 7M14 9l-6 7" stroke="#222" /></Svg> },
  { name: 'Game', running: true, icon: <Svg><rect width="24" height="24" rx="3" fill="#2a2a2a" /><path d="M18 8q-4-3-8-1c-5 3-4 11 2 12 4 0 6-2 6-6h-5" fill="none" stroke="#f58a1c" strokeWidth="3" /><path d="m7 7 1-5 4 4z" fill="#f58a1c" /></Svg> },
  { name: 'Photos', running: true, icon: <Svg><path d="M1 1h22v22H1z" fill="#2f8ce8" /><path d="M1 14 9 7l14 16H1z" fill="#123e7c" /><path d="m12 15 4-3 7 7v4h-4z" fill="#69b2f5" /><circle cx="17" cy="6" r="2" fill="#fff" /></Svg> },
];

const Taskbar = () => (
  <footer className="flex h-10 shrink-0 items-center bg-linear-to-r from-[#25393f] via-[#20323f] to-[#1a2340] font-['Noto_Sans',sans-serif] text-white">
    <button type="button" aria-label="Start" className="flex w-12 shrink-0 justify-center">
      <svg viewBox="0 0 16 16" className="size-4" fill="#fff"><path d="m0 2.300 6.500-.9v6.200H0zM7.300 1.300 16 0v7.600H7.300zM0 8.400h6.500v6.200L0 13.700zM7.300 8.400H16V16l-8.700-1.200z" /></svg>
    </button>
    <div className="flex h-full w-[344px] shrink-0 items-center border border-[#c5c5c5] bg-[#f1f1f1] px-2.5 text-[#222]">
      <Search className="size-[18px] shrink-0 -scale-x-100" strokeWidth={1.500} />
      <input type="text" aria-label="Keresés" placeholder="Írjon ide a kereséshez" className="ml-[11px] w-full min-w-0 text-[14px] outline-none placeholder:text-[#333]" />
    </div>
    <button type="button" aria-label="Task View" className="mr-0.5 flex w-12 shrink-0 justify-center">
      <svg viewBox="0 0 20 20" className="size-5" fill="none" stroke="#fff" strokeWidth="1.200">
        <path d="M2 2v3h11V2M2 18v-3h11v3M2 7.500h11v5H2zM17 2v16" />
        <path d="M16 8h2v3h-2z" fill="#fff" />
      </svg>
    </button>
    <div className="flex h-full min-w-0 flex-1">
      {apps.map(({ name, icon, running, focused }) => (
        <button
          key={name}
          type="button"
          aria-label={name}
          className={focused ? 'flex min-w-0 flex-1 flex-col items-center bg-[#4b5f6c]' : 'flex min-w-0 flex-1 flex-col items-center'}
        >
          <span className="flex flex-1 items-center">{icon}</span>
          <span className={running ? (focused ? 'h-0.5 w-full bg-[#76b9ed]' : 'h-0.5 w-[34px] bg-[#76b9ed]') : 'h-0.5'} />
        </button>
      ))}
    </div>
    <div className="flex h-full shrink-0 items-center pr-1">
      <ChevronUp className="mx-1.5 size-4" strokeWidth={1.500} />
      <Volume2 className="mr-2 size-[18px]" strokeWidth={1.500} />
      <div className="w-[68px] text-center text-[12px] leading-[18px] whitespace-nowrap">
        <p>10:33</p>
        <p>2020. 08. 31.</p>
      </div>
      <div className="relative mr-4 ml-3.5">
        <svg viewBox="0 0 20 20" className="size-5"><path d="M2 1h16v13h-8l-3 4v-4H2z" fill="#fff" /><path d="M5 5h10M5 8h10M5 11h7" stroke="#1b2540" /></svg>
        <span className="absolute -right-1.5 -bottom-1.5 flex size-4 items-center justify-center rounded-full border border-[#888] bg-[#222b38] text-[11px] leading-none">2</span>
      </div>
      <span className="h-full w-px bg-[#59647a]" />
    </div>
  </footer>
);

const App = () => (
  <div className="flex h-screen flex-col overflow-hidden font-['Open_Sans',sans-serif]">
    <TabBar />
    <AddressBar />
    <div className="flex min-h-0 flex-1">
      <div className="flex min-w-0 flex-1 flex-col">
        <AdminHeader />
        <div className="flex min-h-0 flex-1">
          <Sidebar />
          <div className="flex min-w-0 flex-1 flex-col">
            <PageHead />
            <Content />
          </div>
        </div>
      </div>
      <PageScrollbar />
    </div>
    <Taskbar />
  </div>
);

export default App;
